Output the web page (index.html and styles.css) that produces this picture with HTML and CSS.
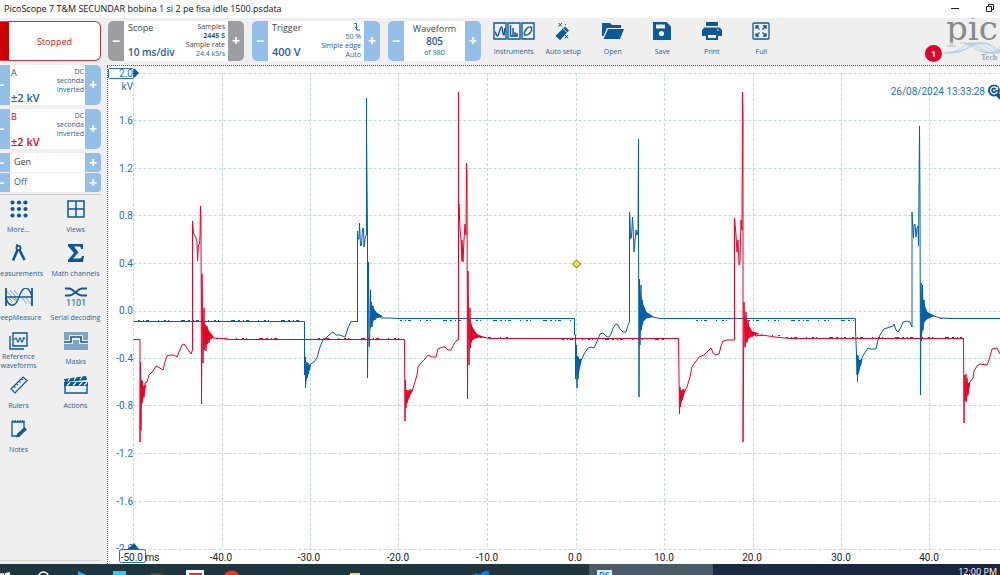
FILE: index.html
```html
<!DOCTYPE html>
<html lang="en">
<head>
    <meta charset="UTF-8">
    <meta name="viewport" content="width=device-width, initial-scale=1.0">
    <title>PicoScope 7 T&amp;M</title>
    <link rel="stylesheet" href="styles.css">
</head>
<body>

<header class="titlebar">
    <span class="title">PicoScope 7 T&amp;M SECUNDAR bobina 1 si 2 pe fisa idle 1500.psdata</span>
    <button class="win-btn" aria-label="Minimize"><svg width="8" height="8" viewBox="0 0 8 8"><path d="M0 4.5h8" stroke="#222"/></svg></button>
    <button class="win-btn" aria-label="Restore"><svg width="8" height="8" viewBox="0 0 8 8" fill="none" stroke="#222"><path d="M.5 2.500h5v5h-5zM2.500 2.500v-2h5v5h-2"/></svg></button>
</header>

<div class="app">
    <aside class="sidebar">
        <button class="stopped">Stopped</button>

        <section class="panel channel chan-a">
            <button class="step" aria-label="A decrease">−</button>
            <div class="panel-body">
                <div class="col"><span>A</span><strong>±2 kV</strong></div>
                <div class="col small"><span>DC</span><span>seconda</span><span>Inverted</span></div>
            </div>
            <button class="step" aria-label="A increase">+</button>
        </section>
        <section class="panel channel chan-b">
            <button class="step" aria-label="B decrease">−</button>
            <div class="panel-body">
                <div class="col"><span>B</span><strong>±2 kV</strong></div>
                <div class="col small"><span>DC</span><span>seconda</span><span>Inverted</span></div>
            </div>
            <button class="step" aria-label="B increase">+</button>
        </section>
        <section class="generator">
            <div class="panel gen">
                <button class="step" aria-label="Previous generator">−</button>
                <div class="panel-body dark">Gen</div>
                <button class="step" aria-label="Next generator">+</button>
            </div>
            <div class="panel gen">
                <button class="step" aria-label="Generator down">−</button>
                <div class="panel-body">Off</div>
                <button class="step" aria-label="Generator up">+</button>
            </div>
        </section>

        <nav class="tools">
            <button class="tool">
                <svg width="18" height="18" viewBox="0 0 18 18" fill="#0b5a96"><circle cx="2.500" cy="2.500" r="2.100"/><circle cx="9" cy="2.500" r="2.100"/><circle cx="15.500" cy="2.500" r="2.100"/><circle cx="2.500" cy="9" r="2.100"/><circle cx="9" cy="9" r="2.100"/><circle cx="15.500" cy="9" r="2.100"/><circle cx="2.500" cy="15.500" r="2.100"/><circle cx="9" cy="15.500" r="2.100"/><circle cx="15.500" cy="15.500" r="2.100"/></svg>
                <span>More...</span>
            </button>
            <button class="tool">
                <svg width="18" height="18" viewBox="0 0 18 18" fill="none" stroke="#0b5a96" stroke-width="1.500"><path d="M1 1h16v16H1zM9 1v16M1 9h16"/></svg>
                <span>Views</span>
            </button>
            <button class="tool">
                <svg width="16" height="18" viewBox="0 0 16 18" fill="none" stroke="#0b5a96"><circle cx="7.500" cy="4" r="2.100" stroke-width="1.800"/><path d="M7 2L5.500 0" stroke-width="1.500"/><path d="M6.500 6L2 16.500M8.500 6l5 10" stroke-width="2.600"/></svg>
                <span>Measurements</span>
            </button>
            <button class="tool">
                <svg width="16" height="18" viewBox="0 0 16 18"><path d="M0 0h15v5h-2c0-2-1-2.500-3-2.500H6L10.500 8.500 5 14.500h5.500c2 0 3-.5 3.500-2.500h2l-1 6H0v-2l6-7-6-7z" fill="#0b5a96"/></svg>
                <span>Math channels</span>
            </button>
            <button class="tool">
                <svg width="28" height="18" viewBox="0 0 28 18" fill="none" stroke="#0b5a96"><path d="M1 0v18M27 0v18" stroke-width="1.800"/><path d="M1 9h26M1 9C3 19 10 21 14 9S24-3 27 9" stroke-width="1.300"/><path d="M3 9l5 5M6 9l5 4M9 9l3 3M1 2l6 7M5 2l6 7M9 2l4 5M17 10l5 6M21 10l5 6" stroke-width=".5"/></svg>
                <span>DeepMeasure</span>
            </button>
            <button class="tool">
                <svg width="24" height="20" viewBox="0 0 24 20"><path d="M1 1.500h4c4 0 8 7 13 7h5M1 8.500h4c5 0 9-7 13-7h5" fill="none" stroke="#0b5a96" stroke-width="1.800"/><text class="icon-text" x="12" y="19" font-size="9" text-anchor="middle">1101</text></svg>
                <span>Serial decoding</span>
            </button>
            <button class="tool">
                <svg width="19" height="18" viewBox="0 0 19 18" fill="none" stroke="#0b5a96"><path d="M4 1h14v13H4z" stroke-width="1.400"/><path d="M1 4v13h14" stroke-width="1.400"/><path d="M5.500 8c1-3 2-3 2.500 0s1.500 3 2 0 1.500-3 2 0 1.500 3 2 0 1-3 2-1" stroke-width="1.200"/></svg>
                <span>Reference waveforms</span>
            </button>
            <button class="tool">
                <svg width="24" height="18" viewBox="0 0 24 18"><path d="M0 0h24v8h-5V3H5v5H0zM0 12h9V8h6v4h9v6H0z" fill="#7fa4c6"/><path d="M0 10h7V5h10v5h7" fill="none" stroke="#0b5a96" stroke-width="1.600"/></svg>
                <span>Masks</span>
            </button>
            <button class="tool">
                <svg width="18" height="18" viewBox="0 0 18 18" fill="none" stroke="#0b5a96" stroke-width="1.200"><path d="M1 13L13 1l4 3.500L5 17zM4 10l1.500 1.500M6.500 7.500L8 9M9 5l1.500 1.500M11.500 2.500L13 4"/></svg>
                <span>Rulers</span>
            </button>
            <button class="tool">
                <svg width="24" height="18" viewBox="0 0 24 18"><path d="M1 7h22v10H1z" fill="none" stroke="#0b5a96" stroke-width="1.400"/><path d="M0 3l22-3 1 4L1 6zM0 6h24v4H0z" fill="#0b5a96"/><path d="M4 5l2-3M10 4.200l2-3M16 3.500l2-3M3 9.500l3-3M9 9.500l3-3M15 9.500l3-3M20 9.500l3-3" stroke="#efefef" stroke-width="1.300"/></svg>
                <span>Actions</span>
            </button>
            <button class="tool">
                <svg width="18" height="18" viewBox="0 0 18 18"><path d="M14 9V2H2v14h8" fill="none" stroke="#0b5a96" stroke-width="1.300"/><path d="M2 1.200h13" stroke="#0b5a96" stroke-width="1.800" stroke-dasharray="1.500 1"/><path d="M14.500 7L17 9.500 9.500 16.500 6 17.500 7 14z" fill="#0b5a96"/></svg>
                <span>Notes</span>
            </button>
        </nav>
    </aside>

    <main class="workspace">
        <div class="toolbar">
            <section class="panel scope">
                <button class="step" aria-label="Shorter timebase">−</button>
                <div class="panel-body">
                    <div class="col"><span class="dark">Scope</span><strong>10 ms/div</strong></div>
                    <div class="col small"><span class="dark">Samples</span><b>2445 S</b><span class="dark">Sample rate</span><span>24.4 kS/s</span></div>
                </div>
                <button class="step" aria-label="Longer timebase">+</button>
            </section>
            <section class="panel trigger">
                <button class="step" aria-label="Lower trigger">−</button>
                <div class="panel-body">
                    <div class="col"><span class="dark">Trigger</span><strong>400 V</strong></div>
                    <div class="col small">
                        <svg width="8" height="10" viewBox="0 0 8 10"><path d="M1 1.500h2.500v6.500H7M1.500 4.500l2 2" fill="none" stroke="#2a6da6"/></svg>
                        <span>50 %</span><span>Simple edge</span><span>Auto</span>
                    </div>
                </div>
                <button class="step" aria-label="Raise trigger">+</button>
            </section>
            <section class="panel waveform">
                <button class="step" aria-label="Previous waveform">−</button>
                <div class="panel-body">
                    <div class="col"><span class="dark">Waveform</span><strong>805</strong><span class="count">of 980</span></div>
                </div>
                <button class="step" aria-label="Next waveform">+</button>
            </section>

            <nav class="actions">
                <button class="tool">
                    <svg width="42" height="18" viewBox="0 0 42 18" fill="none" stroke="#0b5a96" stroke-width="1.400"><path d="M1 1h12v16H1zM15 1h12v16H15zM29 1h12v16H29z"/><path d="M2 10c1 0 1 4 2.500 4S7 5 8.500 5 9 13 11 13l1-7"/><path d="M17.500 3v11H25M20 14V6M22 14v-4M24 14v-3"/><path d="M31.500 13c-1-3 3-9 6-8s0 9-6 8z"/></svg>
                    <span>Instruments</span>
                </button>
                <button class="tool">
                    <svg width="18" height="18" viewBox="0 0 18 18"><path d="M2.500 14L11 5.500l3 3L6 17z" fill="#0b5a96" stroke="#0b5a96" stroke-width="1.500"/><path d="M9 6.500l4 4" stroke="#efefef"/><path d="M4.500 1l3.500 3.500M8 1L4.500 4.500M11 13l3 3.500M14 13l-3 3.500M11 2l1 1" stroke="#0b5a96" stroke-width="1"/></svg>
                    <span>Auto setup</span>
                </button>
                <button class="tool">
                    <svg width="22" height="18" viewBox="0 0 22 18" fill="#0b5a96"><path d="M0 1h8l2 2h9v3H5L1.500 14H0z"/><path d="M6 7h16l-4 10H1.500z"/></svg>
                    <span>Open</span>
                </button>
                <button class="tool">
                    <svg width="18" height="18" viewBox="0 0 18 18"><path d="M0 0h13.500L18 4.500V18H0z" fill="#0b5a96"/><path d="M3 2.500h9v4H3z" fill="#efefef"/><circle cx="8.500" cy="11.500" r="2.600" fill="#efefef"/></svg>
                    <span>Save</span>
                </button>
                <button class="tool">
                    <svg width="20" height="18" viewBox="0 0 20 18"><path d="M4 0h12v4H4zM2.500 5.500h15L20 8v6h-4v-3H4v3H0V8z" fill="#0b5a96"/><path d="M5 12h10v5H5z" fill="none" stroke="#0b5a96" stroke-width="2"/><path d="M15 8h2" stroke="#efefef"/></svg>
                    <span>Print</span>
                </button>
                <button class="tool">
                    <svg width="18" height="18" viewBox="0 0 18 18" fill="none" stroke="#0b5a96" stroke-width="1.300"><rect x="1" y="1" width="16" height="16" rx="1"/><path d="M7.500 7.500L4 4M4 7V4h3M10.500 7.500L14 4M11 4h3v3M7.500 10.500L4 14M4 11v3h3M10.500 10.500L14 14M11 14h3v-3"/></svg>
                    <span>Full</span>
                </button>
            </nav>

            <div class="brand">
                <span class="badge">1</span>
                <svg class="logo" width="58" height="47" viewBox="0 0 58 47">
                    <text class="logo-name" x="4" y="22">pic</text>
                    <path d="M0 24.500h58v12H0z" fill="#efefef" fill-opacity=".7"/>
                    <g fill="none" stroke="#9fc4e0" stroke-width=".7">
                        <path d="M0 35c20 0 20-10 32-10s14 10 26 10"/>
                        <path d="M4 35c20 0 22-10 34-10s12 8 20 9"/>
                        <path d="M8 35c18 0 20-10 32-10s12 6 18 8"/>
                        <path d="M18 25c12 0 16 10 28 10s8-4 12-6"/>
                        <path d="M22 25c12 0 16 10 28 10s6-3 8-4"/>
                        <path d="M26 25c12 0 14 10 26 10"/>
                    </g>
                    <text class="logo-sub" x="39" y="42">Tech</text>
                </svg>
            </div>
        </div>

        <div class="plot">
            <svg viewBox="108 66 892 498" preserveAspectRatio="xMinYMin meet" role="img" aria-label="Ignition waveform, channels A and B">
                <path class="grid" d="M133.500 73.500H1000M133.500 120.500H1000M133.500 168.500H1000M133.500 215.500H1000M133.500 263.500H1000M133.500 311.500H1000M133.500 358.500H1000M133.500 405.500H1000M133.500 453.500H1000M133.500 501.500H1000M133.500 549.500H1000"/>
                <path class="grid" d="M133.500 73V549M222.500 73V549M310.500 73V549M398.500 73V549M487.500 73V549M576.500 73V549M664.500 73V549M753.500 73V549M841.500 73V549M929.500 73V549"/>

                <!-- channel A -->
                <polyline class="trace a" points="133.500,321.500 304.500,321.500 304.500,375 305.500,357 305.500,388 307,362 307,378 308,363 308,374 309,365 309.500,370 310.500,364 314,362 317,358 320,347 323,340 326,338 329,335 333,332 336,335 340,335 345,337 348,328 351,321.500 357.500,321.500 357.500,231 358,239 359,239 359.500,223 360.500,246 361.500,245 362.500,229 363.500,228 364,247 365.500,236 366.500,235 366.500,98 366.500,130 367.500,234 367.500,378 368.500,262 369,345 369.500,347 370.500,290 370.500,328 371.500,302 372,327 373,306 373.500,320 375,311 375,320 376,313 377,318 379,316 381,318 390,318 398,318.500 574.500,318.500 574.500,335 575.500,335 575.500,379 576.500,345 577,388 577.500,356 578,379 578.500,357 579,367 580,361 582,359 584,354 588,348 591,347 594,348 596,344 598,339 600,334 603,333 605,335 607,337 609,337 611,334 613,328 616,324 618,325 620,329 623,332 626,332 628,325 629.500,322 629.500,212 630,220 630.500,239 631.500,237 632.500,217 633,225 634,252 635,241 636,230 637,235 638,231 638.500,139 638.500,222 639,397 639.500,279 640,345 641,285 641,330 642,300 642.500,324 643.500,305 644,318 645,312 646,318 647,313 649,317 653,317 660,318.500 855.500,318.500 855.500,330 856.500,354 857,375 857.500,355 857.500,382 858,356 858.500,373 860,362 860.500,366 862,358 864,354 868,348 870,349 876,349 878,340 880,335 884,329 890,327 893,326 894,324 896,330 898,332 901,327 903,322 907,321 910,322 912,327 912,212 912.500,223 913.500,238 914,225 915,224 916,237 917,228 918,226 918.500,246 919,186 919.500,126 920,200 920.500,395 921,283 921.500,341 922.500,285 923,330 924,300 924.500,321 926,312 927,319 928,313 930,314 934,316 940,318 955,318.500 1000,318.500"/>
                <path class="noise a" d="M138 320.500h166M400 320.500h173M696 320.500h32M748 320.500h106M940 318.500h60"/>
                <path class="ring a" d="M370 300l3 7 3 5 7 4.500-7 2-3 3-3 8zM640.500 292l3 13 3 7 7 4.500-7 2-3 3-3 12zM921.500 290l3 15 3 7 7 4-7 3-3 3-3 14zM305 362l3 3 3-1-2 9-3 8zM576 358l3 1 3 0-2 9-3 14zM856.500 358l3 2 3-1-2 7-3 11z"/>

                <!-- channel B -->
                <polyline class="trace b" points="133.500,339.500 140,339.500 140,442 140.500,362 141,430 141.500,380 142,403 142.500,381 143,395 143.500,386 144,397 145,383 147,382 149,375 151,373 153,371 156,366 158,367 160,368 163,370 165,362 167,356 170,355 174,355 177,357 180,350 182,345 184,344 187,348 191,354 192.500,350 192.500,221 193.500,233 196,238 197,242 197.500,261 198.500,245 199.500,244 200,236 200.500,206 201,220 201.500,404 202,317 202,274 203,363 204,308 204.500,350 205,324 206,351 207,326 207.500,344 208.500,330 209,343 210.500,334 211,339 212,336 213,338 222,338.500 230,339.500 404.500,339.500 405,421 405.500,380 406,408 406.500,390 407,403 408,390 409,397 410,389 412,391 414,385 417,375 418,367 421,363 425,359 428,355 432,357 436,357 438,349 442,347 445,347 448,350 451,350 454,344 457,340 458.500,340 458.500,92 458.500,225 459,204 460,228 461,240 462,261 462,240 463,262 464,240 465,224 466,235 466.500,163 467,178 467.500,399 468,297 468,271 469,365 470,308 470.500,348 471,325 472,340 473,330 474,338 475,332 478,336 482,337 490,338.500 678.500,338.500 679,378 679.500,414 680,387 680.500,407 681,390 682,400 683,389 684,393 687,387 690,377 692,367 696,361 699,357 704,355 707,352 711,348 713,353 716,355 719,354 721,346 723,341 727,340 734.500,340 734.500,218 736,235 737,252 738,240 739,265 740,262 741,220 742,230 742.500,92 743,115 743,442 744,302 745,347 746,312 747,342 748,320 749,337 751,331 752,337 754,333 756,336 762,335 775,337 790,338.500 963.500,338.500 964,423 964.500,375 965,401 966,374 966.500,402 967,378 968,395 969,383 970,382 973,378 974,371 977,366 980,364 987,365 989,360 992,349 997,348 1000,354"/>
                <path class="noise b" d="M216 338.500h66M318 338.500h84M480 337.500h30M562 339.500h105M752 335.500h30M786 337.500h60M852 337.500h110"/>
                <path class="ring b" d="M203 321l3 5 3 5 5 6-5 3-3 5-3 5zM469.500 318l3 9 4 7 8 3-8 1-4 2-3 8zM745 315l3 9 4 7 8 3-8 2-4 3-3 7zM140.500 384l3 3 3-3-2 10-3 12zM405.500 392l4-1 4-2-3 6-4 9zM679.500 390l3 1 3-2-2 8-3 8zM964.500 380l3 3 3 0-2 10-3 8z"/>

                <path d="M576.500 260l4 4-4 4-4-4z" fill="#fff200" stroke="#555"/>

                <g class="y-axis">
                    <text x="133" y="124">1.6</text>
                    <text x="133" y="172">1.2</text>
                    <text x="133" y="219">0.8</text>
                    <text x="133" y="267">0.4</text>
                    <text x="133" y="314">0.0</text>
                    <text x="133" y="362">-0.4</text>
                    <text x="133" y="409">-0.8</text>
                    <text x="133" y="457">-1.2</text>
                    <text x="133" y="505">-1.6</text>
                    <text x="133" y="552">-2.0</text>
                    <rect class="axis-box" x="108.500" y="68.500" width="25" height="10" rx="1"/>
                    <path d="M134 68l5 5-5 5z" fill="#0b5a96"/>
                    <text x="133" y="77">2.0</text>
                    <text x="133" y="90">kV</text>
                </g>
                <g class="x-axis">
                    <path d="M128 549l6-6 5 6z" fill="#0b5a96"/>
                    <rect class="axis-box" x="119.500" y="549.500" width="26" height="13" rx="2"/>
                    <text x="140" y="561">-50.0 ms</text>
                    <text x="221" y="561">-40.0</text>
                    <text x="309" y="561">-30.0</text>
                    <text x="398" y="561">-20.0</text>
                    <text x="487" y="561">-10.0</text>
                    <text x="575" y="561">0.0</text>
                    <text x="664" y="561">10.0</text>
                    <text x="752" y="561">20.0</text>
                    <text x="841" y="561">30.0</text>
                    <text x="929" y="561">40.0</text>
                </g>
                <text class="stamp" x="985" y="95">26/08/2024 13:33:28</text>
                <circle cx="994" cy="90.500" r="6" fill="#0b5a96"/>
                <path d="M997 94l4 4" stroke="#0b5a96" stroke-width="4"/>
                <path d="M997 88.500a3.500 3.500 0 1 0 .3 3M997.500 87v2.500H995" fill="none" stroke="#fff" stroke-width="1.200"/>
                <circle cx="994" cy="90.500" r="1" fill="#fff"/>
            </svg>
        </div>
    </main>
</div>

<footer class="taskbar">
    <svg class="task-icons" width="589" height="11" viewBox="0 0 589 11">
        <path d="M0 9.500l4-.5v3H0zM5 9l5-1v4H5z" fill="#fff"/>
        <circle cx="43.500" cy="13" r="5" fill="none" stroke="#fff" stroke-width="1.500"/>
        <path d="M78 7l11 5H78z" fill="#3b9bdc"/>
        <path d="M113 7h13v5h-13z" fill="#35c5ee"/>
        <path d="M150 9h13v3h-13z" fill="#4b4646"/>
        <path d="M186 6h18v6h-18z" fill="#fff"/>
        <path d="M189 9h13v3h-13z" fill="#d8333d"/>
        <circle cx="231.500" cy="15" r="8.500" fill="#e23c30"/>
        <path d="M350 9h10v3h-10z" fill="#f7d46c"/>
        <path d="M474 9l6 1 4-3h5v6h-13z" fill="#1877d2"/>
    </svg>
    <button class="task-app"><span>PS</span></button>
    <time>12:00 PM</time>
</footer>

</body>
</html>
```

FILE: styles.css
```css
* {
    box-sizing: border-box;
}
body {
    margin: 0;
    height: 100vh;
    display: flex;
    flex-direction: column;
    overflow: hidden;
    font-family: "Open Sans", "Noto Sans", sans-serif;
    font-size: 9px;
    color: #1d5e98;
    background-color: #efefef;
}
button {
    font: inherit;
    color: inherit;
    border: none;
    background: none;
    padding: 0;
    cursor: pointer;
}
svg {
    display: block;
    flex: none;
}

/* title bar */
.titlebar {
    display: flex;
    align-items: center;
    gap: 27px;
    height: 18px;
    padding: 0 6px 2px 4px;
    background-color: #fff;
    color: #111;
}
.title {
    flex: 1;
    white-space: nowrap;
}

.app {
    display: flex;
    flex: 1;
    min-height: 0;
}

/* left side, its first buttons run under the window edge */
.sidebar {
    display: flex;
    flex-direction: column;
    width: 117px;
    margin-left: -10px;
    padding: 3px 6px 3px 0;
    gap: 4px;
    flex: none;
}
.sidebar::after {
    content: "";
    margin-top: auto;
    border-top: 1px solid #d4d4d4;
}
.stopped {
    height: 40px;
    border: 1px solid #c9323a;
    border-left: 19px solid #cc0000;
    border-radius: 6px;
    background-color: #fff;
    color: #cc1a22;
}
.panel {
    display: flex;
    height: 40px;
    border-radius: 5px;
    overflow: hidden;
    background-color: #fff;
}
.step {
    width: 16px;
    flex: none;
    background-color: #93bfe9;
    color: #fff;
    font-size: 14px;
    font-weight: bold;
    line-height: 16px;
}
.sidebar .step:first-child {
    width: 20px;
}
.panel-body {
    display: flex;
    flex: 1;
    justify-content: space-between;
    padding: 2px 1px 1px 1px;
    white-space: nowrap;
    line-height: 12px;
}
.col {
    display: flex;
    flex-direction: column;
    justify-content: space-between;
}
.col strong {
    font-size: 10px;
    font-weight: 600;
}
.channel .col strong {
    font-size: 11px;
}
.small {
    align-items: flex-end;
    justify-content: flex-start;
    font-size: 7px;
    line-height: 9px;
}
.dark {
    color: #444;
}
.chan-b .col:first-child {
    color: #e4002b;
}
.generator {
    display: flex;
    flex-direction: column;
    gap: 1px;
    padding-bottom: 2px;
    border-bottom: 1px solid #c8c8c8;
}
.gen {
    height: 19px;
    border-radius: 3px;
}
.gen .panel-body {
    padding: 3px 4px;
}

/* icon buttons */
.tools {
    display: grid;
    grid-template-columns: 57px 57px;
    row-gap: 5px;
}
.tool {
    display: grid;
    grid-template-rows: 20px 18px;
    row-gap: 1px;
    justify-items: center;
    align-items: center;
    font-size: 7px;
    line-height: 9px;
}
.tools .tool span {
    max-width: 50px;
}
.icon-text {
    font-family: Roboto, sans-serif;
    fill: #0b5a96;
}

/* top bar */
.workspace {
    display: flex;
    flex-direction: column;
    flex: 1;
    min-width: 0;
}
.toolbar {
    display: flex;
    gap: 8px;
    height: 48px;
    padding: 3px 0 0 1px;
    border-bottom: 1px dotted #555;
    overflow: hidden;
}
.toolbar .panel {
    flex: none;
}
.toolbar .panel-body {
    padding: 1px 3px 3px 4px;
}
.scope {
    width: 136px;
}
.scope .step {
    background-color: #9c9ea2;
}
.trigger {
    width: 128px;
}
.trigger .col strong {
    font-size: 11px;
}
.waveform {
    width: 93px;
}
.toolbar .waveform .panel-body {
    justify-content: center;
    padding: 2px 0;
}
.waveform .col {
    align-items: center;
}
.count {
    font-size: 7px;
}
.actions {
    display: grid;
    grid-template-columns: repeat(6, 1fr);
    align-content: start;
    width: 297px;
}
.brand {
    display: flex;
    margin-left: auto;
    margin-top: -3px;
}
.badge {
    align-self: flex-end;
    width: 17px;
    height: 17px;
    margin-bottom: 3px;
    border-radius: 50%;
    background-color: #e4002b;
    color: #fff;
    font-weight: bold;
    line-height: 17px;
    text-align: center;
}
.logo-name {
    font-family: "DejaVu Serif", serif;
    font-size: 34px;
    fill: #8a8a8c;
}
.logo-sub {
    font-family: "Liberation Serif", serif;
    font-size: 8px;
    font-weight: bold;
    fill: #a5a5a5;
}

/* graph */
.plot {
    flex: 1;
    min-height: 0;
    border-left: 1px dotted #555;
    background-color: #fff;
    font-family: Roboto, sans-serif;
    font-size: 10px;
}
.plot svg {
    width: 100%;
    height: 100%;
}
.grid {
    fill: none;
    stroke: #b9dde8;
    stroke-dasharray: 3 2;
}
.trace {
    fill: none;
    stroke-width: 1;
}
.a {
    stroke: #0060a8;
}
.b {
    stroke: #ea0029;
}
.noise {
    stroke-dasharray: 2 3 1 2 3 9 1 5 2 2 1 12 4 3;
}
.ring {
    stroke: none;
}
.ring.a {
    fill: #0060a8;
}
.ring.b {
    fill: #ea0029;
}
.y-axis {
    fill: #2072ae;
    text-anchor: end;
}
.x-axis {
    fill: #222;
    text-anchor: middle;
}
.axis-box {
    fill: #fff;
    stroke: #2072ae;
}
.stamp {
    fill: #2072ae;
    text-anchor: end;
}

/* desktop task bar */
.taskbar {
    display: flex;
    height: 11px;
    flex: none;
    overflow: hidden;
    background: linear-gradient(to right, #20363e 0%, #20363e 58%, #1b2a42 72%, #1c2540 100%);
    color: #fff;
}
.task-app {
    display: flex;
    width: 124px;
    padding: 6px 8px 0;
    background-color: #4b5b66;
}
.task-app span {
    padding: 0 2px;
    background-color: #d9edf9;
    color: #2b8bd0;
    font-weight: bold;
    line-height: 9px;
}
.taskbar time {
    margin-left: auto;
    padding: 2px 3px 0 0;
    line-height: 12px;
}
```
